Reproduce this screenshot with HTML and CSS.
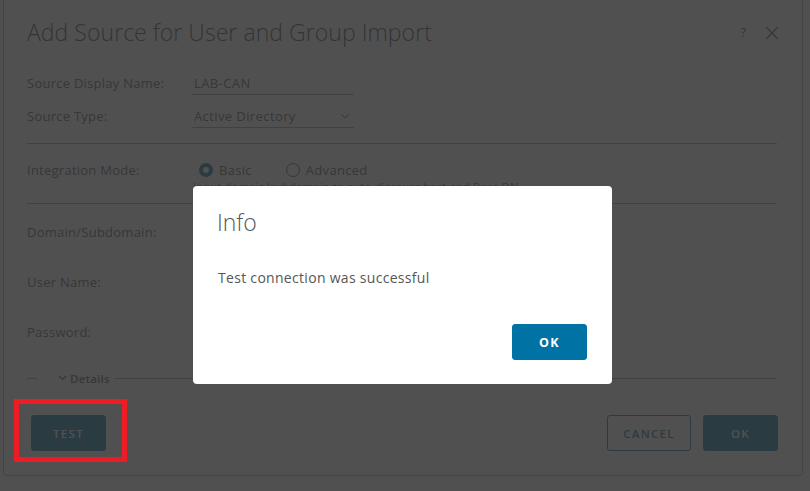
FILE: index.html
```html
<!DOCTYPE html>
<html>
<head>
<meta charset="utf-8">
<link rel="stylesheet" href="styles.css">
</head>
<body>
<div class="modal">
  <div class="modal-header">
    <h3 class="modal-title">Add Source for User and Group Import</h3>
    <div class="header-actions">
      <span class="help">?</span>
      <svg class="close" width="14" height="14" viewBox="0 0 14 14"><path d="M1 1L13 13M13 1L1 13" stroke="#565656" stroke-width="1.3" fill="none"/></svg>
    </div>
  </div>
  <div class="modal-body">
    <div class="row short">
      <span class="label">Source Display Name:</span>
      <div class="input">LAB-CAN</div>
    </div>
    <div class="row short">
      <span class="label">Source Type:</span>
      <div class="input select">Active Directory
        <svg class="chev" width="10" height="6" viewBox="0 0 10 6"><path d="M1 1L5 5L9 1" stroke="#565656" stroke-width="1" fill="none"/></svg>
      </div>
    </div>
    <div class="sep first"></div>
    <div class="mode">
      <div class="mode-line">
        <span class="label">Integration Mode:</span>
        <div class="radios">
          <span class="radio checked"></span><span class="radio-text">Basic</span>
          <span class="radio"></span><span class="radio-text">Advanced</span>
        </div>
      </div>
      <div class="helper">Input domain/subdomain to auto-discover host and Base DN</div>
    </div>
    <div class="sep"></div>
    <div class="rows">
      <div class="row tall"><span class="label">Domain/Subdomain:</span></div>
      <div class="row tall"><span class="label">User Name:</span></div>
      <div class="row tall"><span class="label">Password:</span></div>
    </div>
    <div class="details">
      <span class="dash"></span>
      <svg class="dchev" width="9" height="6" viewBox="0 0 9 6"><path d="M1 1L4.5 4.5L8 1" stroke="#565656" stroke-width="1.2" fill="none"/></svg>
      <span class="details-text">Details</span>
      <span class="dline"></span>
    </div>
  </div>
  <div class="modal-footer">
    <button class="btn primary">TEST</button>
    <span class="spacer"></span>
    <button class="btn outline">CANCEL</button>
    <button class="btn primary">OK</button>
  </div>
</div>

<div class="backdrop">
  <div class="info">
    <h3 class="info-title">Info</h3>
    <p class="info-text">Test connection was successful</p>
    <div class="info-footer"><button class="btn primary info-ok">OK</button></div>
  </div>
</div>

<div class="annotation"></div>
</body>
</html>
```

FILE: styles.css
```css
* { box-sizing: border-box; }
html, body { margin: 0; padding: 0; }
body {
  width: 810px;
  height: 491px;
  overflow: hidden;
  background: #ffffff;
  font-family: "Open Sans", "Liberation Sans", sans-serif;
  color: #565656;
}
.modal {
  margin-left: 3px;
  width: 800px;
  height: 476px;
  background: #fff;
  border: 1px solid #b0b0b0;
  border-top: none;
  border-radius: 0 0 4px 4px;
  padding: 0 24px 0 23px;
  display: flex;
  flex-direction: column;
}
.modal-header {
  display: flex;
  align-items: flex-start;
  height: 66px;
  padding-top: 17px;
}
.modal-title {
  margin: 0;
  font-weight: 300;
  font-size: 23px;
  line-height: 30px;
  color: #444;
  letter-spacing: 0.05px;
  flex: 1;
}
.header-actions {
  display: flex;
  align-items: center;
  gap: 19px;
  padding-top: 9px;
  margin-right: -1px;
}
.help { font-size: 12px; color: #565656; line-height: 14px; }
.close { display: block; }
.row {
  display: flex;
  align-items: center;
}
.row.short { height: 33px; }
.label {
  width: 166px;
  font-size: 13px;
  letter-spacing: 0.25px;
  color: #565656;
  flex: none;
}
.input {
  width: 162px;
  margin-left: -1px;
  height: 21px;
  border-bottom: 1px solid #9a9a9a;
  font-size: 13px;
  letter-spacing: 0.4px;
  color: #565656;
  padding-left: 2px;
  line-height: 18px;
  display: flex;
  align-items: flex-start;
  margin-top: 4px;
}
.select { justify-content: space-between; padding-right: 4px; }
.chev { margin-top: 6px; }
.sep { height: 1px; background: #9a9a9a; margin-right: 1px; }
.sep.first { margin-top: 11px; }
.mode { padding-top: 18px; height: 59px; }
.mode-line { display: flex; align-items: center; height: 16px; }
.radios { display: flex; align-items: center; margin-left: 6px; }
.radio {
  width: 14px; height: 14px; border-radius: 50%;
  border: 1px solid #565656; background: #fff;
}
.radio.checked { border: 4px solid #0072a3; }
.radio-text { font-size: 13px; letter-spacing: 0.3px; color: #565656; margin-left: 6px; margin-right: 34px; }
.helper {
  font-size: 11px;
  letter-spacing: 0.25px;
  color: #565656;
  margin-left: 166px;
  line-height: 14px;
  margin-top: 2px;
}
.rows { padding-top: 3px; }
.row.tall { height: 50px; }
.details {
  display: flex;
  align-items: center;
  height: 20px;
  margin-top: 11px;
}
.dash { width: 10px; height: 1px; background: #9a9a9a; }
.dchev { margin-left: 21px; }
.details-text { font-size: 11.5px; font-weight: 600; margin-left: 3px; letter-spacing: 0.2px; color: #565656; }
.dline { flex: 1; height: 1px; background: #9a9a9a; margin-left: 4px; margin-right: 1px; }
.modal-footer {
  margin-top: auto;
  display: flex;
  align-items: center;
  padding-bottom: 24px;
  padding-left: 4px;
}
.spacer { flex: 1; }
.btn {
  height: 36px;
  padding: 0;
  border-radius: 3px;
  font-family: "Open Sans", "Liberation Sans", sans-serif;
  font-size: 11.5px;
  font-weight: 600;
  letter-spacing: 1.3px;
  border: 1px solid #0072a3;
  text-align: center;
}
.btn.primary { background: #0072a3; color: #fff; width: 75px; }
.btn.outline { background: transparent; color: #0072a3; width: 84px; margin-right: 12px; }
.backdrop {
  position: fixed;
  inset: 0;
  background: rgba(49, 49, 49, 0.85);
  padding: 186px 0 0 193px;
}
.info {
  width: 419px;
  height: 198px;
  background: #fff;
  border-radius: 4px;
  padding: 20px 24px 24px 24px;
  display: flex;
  flex-direction: column;
}
.info-title {
  margin: 0;
  font-weight: 300;
  font-size: 23px;
  line-height: 32px;
  color: #565656;
}
.info-text {
  margin: 30px 0 0 1px;
  font-size: 14px;
  letter-spacing: 0.3px;
  color: #565656;
}
.info-footer { margin-top: auto; display: flex; justify-content: flex-end; }
.info-ok { margin-right: 1px; font-weight: 700; font-size: 12.5px; }
.annotation {
  position: fixed;
  left: 14px;
  top: 399px;
  width: 113px;
  height: 63px;
  border: 5px solid #ee1c25;
}
```
